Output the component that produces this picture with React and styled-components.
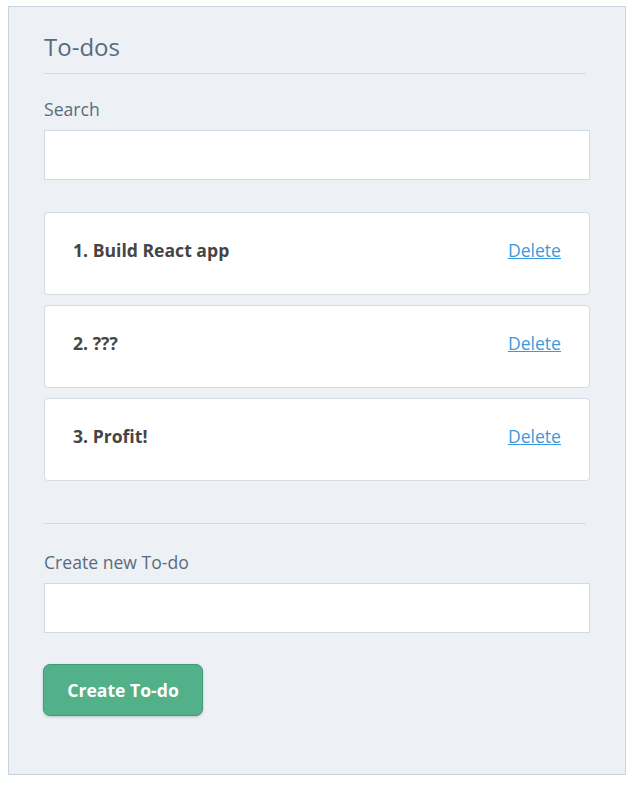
import { useState } from "react";
import styled, { createGlobalStyle } from "styled-components";

const GlobalStyle = createGlobalStyle`
  body {
    margin: 6px 8px 8px;
    background: #ffffff;
    font-family: "Open Sans", "Liberation Sans", sans-serif;
  }
`;

const Panel = styled.div`
  background-color: #edf1f5;
  border: 1px solid #c9d3dd;
  box-shadow: 0 1px 4px rgba(60, 80, 100, 0.18);
  padding: 22px 35px 58px;
  display: flex;
  flex-direction: column;
`;

const Title = styled.h1`
  margin: 0;
  font-size: 24px;
  line-height: 36px;
  font-weight: 400;
  color: #566b7c;
`;

const Rule = styled.hr`
  margin: ${({ top }) => top}px 4px 0 0;
  border: 0;
  border-top: 1px solid #d3dae1;
  height: 0;
`;

const Label = styled.label`
  display: block;
  margin-top: ${({ top }) => top}px;
  font-size: 17.6px;
  line-height: 24px;
  color: #5a6b7b;
`;

const TextInput = styled.input`
  display: block;
  box-sizing: border-box;
  width: 100%;
  height: 50px;
  margin-top: 9px;
  border: 1px solid #d2d9e0;
  background: #ffffff;
  padding: 0 14px;
  font: inherit;
  font-size: 17px;
  outline: none;
`;

const List = styled.div`
  display: flex;
  flex-direction: column;
  gap: 10px;
  margin-top: 32px;
`;

const Card = styled.div`
  display: flex;
  align-items: center;
  justify-content: space-between;
  box-sizing: border-box;
  height: 83px;
  padding: 0 28px 7px 28px;
  background: #ffffff;
  border: 1px solid #d5dbe1;
  border-radius: 4px;
`;

const CardText = styled.span`
  font-size: 17.6px;
  font-weight: 700;
  color: #454545;
`;

const DeleteLink = styled.a`
  font-size: 17.6px;
  color: #3a9adb;
  text-decoration: underline;
  cursor: pointer;
`;

const CreateButton = styled.button`
  align-self: flex-start;
  margin: 31px 0 0 -1px;
  width: 160px;
  height: 52px;
  background-color: #52b188;
  border: 1px solid #3f9c75;
  border-radius: 7px;
  box-shadow: 0 1px 3px rgba(0, 0, 0, 0.2);
  color: #ffffff;
  font-family: inherit;
  font-size: 17.6px;
  font-weight: 700;
  cursor: pointer;
`;

export default function App() {
  const [todos, setTodos] = useState(["Build React app", "???", "Profit!"]);
  const [search, setSearch] = useState("");
  const [draft, setDraft] = useState("");

  const addTodo = () => {
    if (!draft.trim()) return;
    setTodos([...todos, draft.trim()]);
    setDraft("");
  };

  return (
    <>
      <GlobalStyle />
      <Panel>
        <Title>To-dos</Title>
        <Rule top={8} />
        <Label top={23}>Search</Label>
        <TextInput value={search} onChange={(e) => setSearch(e.target.value)} />
        <List>
          {todos.map((todo, i) =>
            todo.toLowerCase().includes(search.toLowerCase()) ? (
              <Card key={i}>
                <CardText>
                  {i + 1}. {todo}
                </CardText>
                <DeleteLink onClick={() => setTodos(todos.filter((_, j) => j !== i))}>
                  Delete
                </DeleteLink>
              </Card>
            ) : null
          )}
        </List>
        <Rule top={42} />
        <Label top={26}>Create new To-do</Label>
        <TextInput value={draft} onChange={(e) => setDraft(e.target.value)} />
        <CreateButton onClick={addTodo}>Create To-do</CreateButton>
      </Panel>
    </>
  );
}
